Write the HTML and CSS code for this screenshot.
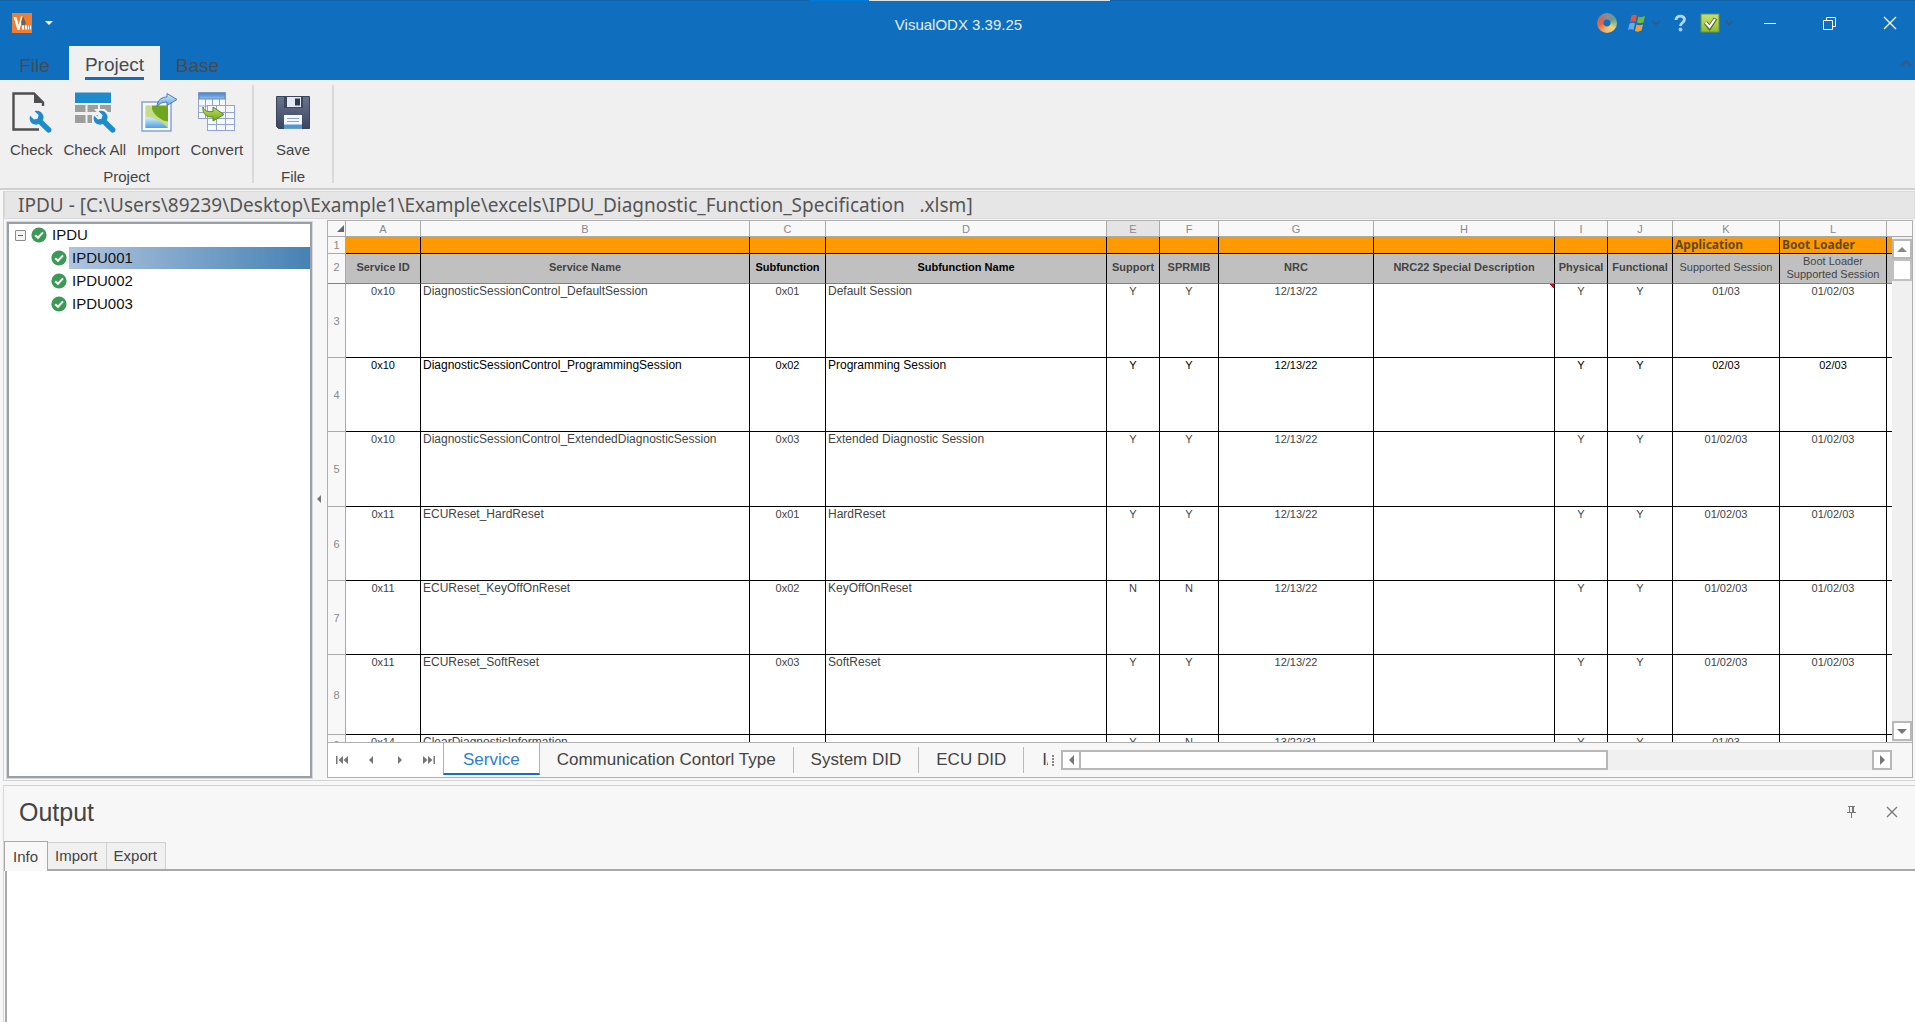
FILE: index.html
```html
<!DOCTYPE html>
<html lang="en">
<head>
<meta charset="utf-8">
<title>VisualODX 3.39.25</title>
<link rel="stylesheet" href="styles.css">
</head>
<body>
<svg class="defs" aria-hidden="true">
  <defs>
    <linearGradient id="g-green" x1="0" y1="0" x2="0" y2="1"><stop offset="0" stop-color="#c8e07a"/><stop offset="1" stop-color="#8dbd2c"/></linearGradient>
    <linearGradient id="g-blue" x1="0" y1="0" x2="0" y2="1"><stop offset="0" stop-color="#d6efff"/><stop offset="1" stop-color="#4f9fe0"/></linearGradient>
    <linearGradient id="g-head" x1="0" y1="0" x2="0" y2="1"><stop offset="0" stop-color="#4a86cc"/><stop offset="1" stop-color="#8fc0ea"/></linearGradient>
    <linearGradient id="g-disk" x1="0" y1="0" x2="0" y2="1"><stop offset="0" stop-color="#6a748e"/><stop offset="1" stop-color="#3b4560"/></linearGradient>
    <linearGradient id="g-arrow" x1="0" y1="0" x2="0" y2="1"><stop offset="0" stop-color="#c2e25a"/><stop offset="1" stop-color="#6fa51c"/></linearGradient>
    <symbol id="i-ok" viewBox="0 0 16 16"><circle cx="8" cy="8" r="7.6" fill="#3c9a57"/><path d="M4.2 8.2 7 10.8 12 5.4" fill="none" stroke="#fff" stroke-width="2"/></symbol>
    <symbol id="i-chev" viewBox="0 0 8 6"><path d="M.5 1 4 4.500 7.500 1" fill="none" stroke="#3d5a78" stroke-width="1.600"/></symbol>
    <symbol id="i-wrench" viewBox="0 0 24 24"><path d="M5.800 1.200 10 5.200 9 9 5.200 10 1.200 6C-.4 10 1.600 14.400 6 15.200c1.500.3 2.900 0 4.200-.6l8.200 8.200c1.300 1.300 3 1.300 4.200.2 1.200-1.200 1.200-3 0-4.200L14.300 10.600c.8-1.500 1.100-3 .6-4.800C13.900 2.200 9.800-.2 5.800 1.200z"/></symbol>
  </defs>
</svg>

<header class="titlebar">
  <div class="title-row">
    <div class="quick">
      <svg width="20" height="20" viewBox="0 0 20 20"><rect width="20" height="20" fill="#f07d31"/><path d="M1.500 4h3l2 8 2.500-8.500h2L7.500 17h-2z" fill="#fff"/><path d="m9 9 2-6 3 7-1 2h-3z" fill="#6a6460"/><path d="M10 12.500h2v4h-2zm3 0h2v4h-2zm3 0h1v4h-1zM18 12.500h1v4h-1z" fill="#fff"/></svg>
      <button class="plain" aria-label="Customize toolbar"><svg width="8" height="5"><path d="M0 0h8L4 4z" fill="#fff"/></svg></button>
    </div>
    <h1 class="app-title">VisualODX 3.39.25</h1>
    <div class="tools">
      <button class="plain" aria-label="Skin"><span class="ring"></span></button>
      <button class="plain" aria-label="Window style">
        <svg width="20" height="20" viewBox="0 0 20 20"><path d="M4.500 2.500Q8 1 10 2.500L8.500 9Q6.500 7.500 3 9z" fill="#dd5548"/><path d="M11.500 3.500Q14 5 18 3L16.500 9.500Q13 11 10 9.500z" fill="#74b843"/><path d="M2.500 10.500Q6 9 8 10.500L6.500 17Q4 15.500 1 17z" fill="#6ba9e6"/><path d="M9.500 11.500Q12 13 16 11.500L14.500 17.500Q11 19.500 8 18z" fill="#f0a03a"/></svg>
        <svg width="8" height="6"><use href="#i-chev"/></svg>
      </button>
      <button class="plain" aria-label="Help"><svg width="20" height="20" viewBox="0 0 20 20"><path d="M6 7c0-5 8.500-5 8.500-.5 0 3-4 3-4 6.500" fill="none" stroke="#b5d8f8" stroke-width="2.800"/><circle cx="10.500" cy="16.500" r="1.900" fill="#a6cdf2"/></svg></button>
      <button class="plain" aria-label="Validation">
        <svg width="20" height="20" viewBox="0 0 20 20"><rect x="1" y="1" width="18" height="18" fill="url(#g-green)" stroke="#71942a"/><path d="m5.500 9.500 4 5 6-9" fill="none" stroke="#54602f" stroke-width="4"/><path d="m5.500 9.500 4 4.500 5.500-8" fill="none" stroke="#fff" stroke-width="2.200"/></svg>
        <svg width="8" height="6"><use href="#i-chev"/></svg>
      </button>
      <div class="window-buttons">
        <button class="plain" aria-label="Minimize"><svg width="14" height="14"><path d="M1 7.500h12" stroke="#fff"/></svg></button>
        <button class="plain" aria-label="Restore"><svg width="14" height="14"><path d="M.5 4.500h9v9h-9zM3.500 4V1.500h9v9H10" fill="none" stroke="#fff"/></svg></button>
        <button class="plain" aria-label="Close"><svg width="14" height="14"><path d="m1 1 12 12M13 1 1 13" stroke="#fff" stroke-width="1.300"/></svg></button>
      </div>
    </div>
  </div>
  <nav class="ribbon-tabs">
    <button class="ribbon-tab">File</button>
    <button class="ribbon-tab active"><span>Project</span></button>
    <button class="ribbon-tab">Base</button>
    <button class="plain collapse" aria-label="Collapse ribbon"><svg width="12" height="8"><path d="m1 7 5-5 5 5" fill="none" stroke="#3d5a78" stroke-width="1.800"/></svg></button>
  </nav>
</header>

<section class="ribbon">
  <div class="group">
    <div class="group-items">
      <button class="cmd"><svg width="42" height="42" viewBox="0 0 42 42"><path d="M33 15V11.500L24 2.500H3.500v36H29" fill="none" stroke="#4f4f4f" stroke-width="2.400"/><path d="M24 2v10h10z" fill="#4f4f4f"/><use href="#i-wrench" x="19" y="18" width="24" height="24" fill="#f0f0f0" stroke="#f0f0f0" stroke-width="4"/><use href="#i-wrench" x="19" y="19" width="23" height="23" fill="#1e8bcd"/></svg>Check</button>
      <button class="cmd"><svg width="42" height="42" viewBox="0 0 42 42"><path d="M1 1.500h36V12H1z" fill="#1e8bcd"/><path d="M1 14h10.500v7H1zm12.500 0H24v7H13.500zM26 14h11v7H26zM1 24h10.500v8H1zm12.500 0H24v8H13.500z" fill="#9d9d9b"/><use href="#i-wrench" x="18" y="18" width="24" height="24" fill="#f0f0f0" stroke="#f0f0f0" stroke-width="4"/><use href="#i-wrench" x="19" y="19" width="23" height="23" fill="#1e8bcd"/></svg>Check All</button>
      <button class="cmd"><svg width="42" height="42" viewBox="0 0 42 42"><rect x="5" y="11" width="29" height="29" fill="#f7faff" stroke="#8ba1d2" stroke-width="1.500"/><path d="M8.500 14.500H31V37H8.500z" fill="#dcebb4"/><path d="M15 14.500h16v16c-7 0-14-3-16-9z" fill="#6ea71b"/><path d="M8.500 14.500h6c0 8 7 13 16.500 17V37H8.500z" fill="#c7dc8a"/><path d="M8.500 26c8 0 16 4 22.500 11H8.500z" fill="url(#g-blue)"/><path d="M20 16C20 8 26 6 30 6V2.500L40 8.500l-10 6V11c-4 0-7 1-10 5z" fill="url(#g-blue)" stroke="#5377b4"/></svg>Import</button>
      <button class="cmd"><svg width="42" height="42" viewBox="0 0 42 42"><g stroke="#94a3d2" fill="#f5f8ff"><rect x="2.500" y="1.500" width="27" height="26"/><path d="M9.500 8v19m7-19v19m7-19v19M3 15h27M3 21.500h27"/><rect x="3" y="2" width="26" height="6" fill="url(#g-head)" stroke="#6389c0"/><rect x="11.500" y="14.500" width="27" height="25"/><path d="M20.500 15v24m9-24v24M12 21.500h26M12 27.500h26M12 33.500h26"/></g><path d="M7 16c1 4 5 5 10 4.500V16l11 7.500L17 30v-4C11 26.500 6 23 7 16z" fill="url(#g-arrow)" stroke="#5a8a1d"/></svg>Convert</button>
    </div>
    <div class="group-name">Project</div>
  </div>
  <div class="group group-file">
    <div class="group-items">
      <button class="cmd"><svg width="42" height="42" viewBox="0 0 42 42"><path d="M4.500 5.500h33v32h-31l-2-2z" fill="url(#g-disk)" stroke="#39435c"/><path d="M12 5h19v12H12z" fill="#3c465f"/><path d="M15 6h14v10H15z" fill="#e4e9f1"/><path d="M23 7.500h5v7h-5z" fill="#2e3850"/><path d="M12 24h18v13.500H12z" fill="#f5f8fc"/><path d="M12 33.500h18v4H12z" fill="#4b9ad6"/><path d="M15 27.500h12M15 30.500h12" stroke="#8ea3c4"/></svg>Save</button>
    </div>
    <div class="group-name">File</div>
  </div>
</section>

<main class="workspace">
  <h2 class="caption">IPDU - [C:\Users\89239\Desktop\Example1\Example\excels\IPDU_Diagnostic_Function_Specification&nbsp;&nbsp; .xlsm]</h2>
  <div class="split">
    <aside class="tree">
      <div class="tree-row root"><button class="toggle" aria-label="Collapse IPDU"></button><svg width="16" height="16"><use href="#i-ok"/></svg><span class="node">IPDU</span></div>
      <div class="tree-row"><svg width="16" height="16"><use href="#i-ok"/></svg><span class="node selected">IPDU001</span></div>
      <div class="tree-row"><svg width="16" height="16"><use href="#i-ok"/></svg><span class="node">IPDU002</span></div>
      <div class="tree-row"><svg width="16" height="16"><use href="#i-ok"/></svg><span class="node">IPDU003</span></div>
    </aside>
    <div class="splitter"><svg width="5" height="8"><path d="M4 0v8L0 4z" fill="#777"/></svg></div>
    <section class="sheet">
      <div class="sheet-body">
        <div class="cells">
          <table>
            <colgroup><col class="w-n"><col class="w-a"><col class="w-b"><col class="w-c"><col class="w-d"><col class="w-e"><col class="w-f"><col class="w-g"><col class="w-h"><col class="w-i"><col class="w-j"><col class="w-k"><col class="w-l"><col></colgroup>
            <thead>
              <tr class="letters"><th class="corner"><svg width="7" height="7"><path d="M7 0v7H0z" fill="#666"/></svg></th><th>A</th><th>B</th><th>C</th><th>D</th><th class="hot">E</th><th>F</th><th>G</th><th>H</th><th>I</th><th>J</th><th>K</th><th>L</th><th></th></tr>
              <tr class="band"><th class="num">1</th><td></td><td></td><td></td><td></td><td></td><td></td><td></td><td></td><td></td><td></td><td>Application</td><td>Boot Loader</td><td></td></tr>
              <tr class="heads"><th class="num">2</th><th>Service ID</th><th>Service Name</th><th class="dark">Subfunction</th><th class="dark">Subfunction Name</th><th>Support</th><th>SPRMIB</th><th>NRC</th><th>NRC22 Special Description</th><th>Physical</th><th>Functional</th><th class="light">Supported Session</th><th class="light">Boot Loader<br>Supported Session</th><th></th></tr>
            </thead>
            <tbody>
              <tr><th class="num">3</th><td>0x10</td><td>DiagnosticSessionControl_DefaultSession</td><td>0x01</td><td>Default Session</td><td>Y</td><td>Y</td><td>12/13/22</td><td class="note"></td><td>Y</td><td>Y</td><td>01/03</td><td>01/02/03</td><td></td></tr>
              <tr class="dark"><th class="num">4</th><td>0x10</td><td>DiagnosticSessionControl_ProgrammingSession</td><td>0x02</td><td>Programming Session</td><td>Y</td><td>Y</td><td>12/13/22</td><td></td><td>Y</td><td>Y</td><td>02/03</td><td>02/03</td><td></td></tr>
              <tr class="mid"><th class="num">5</th><td>0x10</td><td>DiagnosticSessionControl_ExtendedDiagnosticSession</td><td>0x03</td><td>Extended Diagnostic Session</td><td>Y</td><td>Y</td><td>12/13/22</td><td></td><td>Y</td><td>Y</td><td>01/02/03</td><td>01/02/03</td><td></td></tr>
              <tr><th class="num">6</th><td>0x11</td><td>ECUReset_HardReset</td><td>0x01</td><td>HardReset</td><td>Y</td><td>Y</td><td>12/13/22</td><td></td><td>Y</td><td>Y</td><td>01/02/03</td><td>01/02/03</td><td></td></tr>
              <tr><th class="num">7</th><td>0x11</td><td>ECUReset_KeyOffOnReset</td><td>0x02</td><td>KeyOffOnReset</td><td>N</td><td>N</td><td>12/13/22</td><td></td><td>Y</td><td>Y</td><td>01/02/03</td><td>01/02/03</td><td></td></tr>
              <tr class="tall"><th class="num">8</th><td>0x11</td><td>ECUReset_SoftReset</td><td>0x03</td><td>SoftReset</td><td>Y</td><td>Y</td><td>12/13/22</td><td></td><td>Y</td><td>Y</td><td>01/02/03</td><td>01/02/03</td><td></td></tr>
              <tr class="last"><th class="num">9</th><td>0x14</td><td>ClearDiagnosticInformation</td><td></td><td></td><td>Y</td><td>N</td><td>13/22/31</td><td></td><td>Y</td><td>Y</td><td>01/03</td><td></td><td></td></tr>
            </tbody>
          </table>
        </div>
        <div class="vscroll">
          <div class="vscroll-head"></div>
          <button class="sb" aria-label="Scroll up"><svg width="10" height="5"><path d="M0 5h10L5 0z" fill="#888"/></svg></button>
          <div class="vthumb"></div>
          <button class="sb down" aria-label="Scroll down"><svg width="10" height="5"><path d="M0 0h10L5 5z" fill="#777"/></svg></button>
        </div>
      </div>
      <div class="sheet-foot">
        <div class="pager">
          <button class="plain" aria-label="First sheet"><svg width="12" height="8"><path d="M0 0h1.500v8H0zM7 0v8L2.500 4zM12 0v8L7.500 4z" fill="#777"/></svg></button>
          <button class="plain" aria-label="Previous sheet"><svg width="12" height="8"><path d="M8 0v8L4 4z" fill="#777"/></svg></button>
          <button class="plain" aria-label="Next sheet"><svg width="12" height="8"><path d="M4 0v8l4-4z" fill="#777"/></svg></button>
          <button class="plain" aria-label="Last sheet"><svg width="12" height="8"><path d="M10.500 0H12v8h-1.500zM0 0v8l4.500-4zM5 0v8l4.500-4z" fill="#777"/></svg></button>
        </div>
        <button class="sheet-tab active">Service</button>
        <button class="sheet-tab">Communication Contorl Type</button>
        <button class="sheet-tab">System DID</button>
        <button class="sheet-tab">ECU DID</button>
        <button class="sheet-tab cut">I/O</button>
        <span class="grip"></span>
        <div class="hscroll">
          <button class="sb" aria-label="Scroll left"><svg width="5" height="10"><path d="M5 0v10L0 5z" fill="#777"/></svg></button>
          <div class="hthumb"></div>
          <div class="htrack"></div>
          <button class="sb" aria-label="Scroll right"><svg width="5" height="10"><path d="M0 0v10l5-5z" fill="#777"/></svg></button>
        </div>
      </div>
    </section>
  </div>
</main>

<section class="output">
  <div class="output-head">
    <h2>Output</h2>
    <button class="plain" aria-label="Auto hide"><svg width="9" height="12"><path d="M1 .5h7M2.500 1v5M6.500 1v5M5.500 1v5M0 6.500h9M4.500 7v5" fill="none" stroke="#777"/></svg></button>
    <button class="plain" aria-label="Close output"><svg width="12" height="12"><path d="m1 1 10 10M11 1 1 11" stroke="#777" stroke-width="1.300"/></svg></button>
  </div>
  <div class="output-tabs">
    <button class="out-tab active">Info</button><button class="out-tab">Import</button><button class="out-tab">Export</button>
  </div>
  <div class="output-body" role="log"></div>
</section>
</body>
</html>
```

FILE: styles.css
```css
* { box-sizing: border-box; }

body {
  margin: 0;
  height: 100vh;
  display: flex;
  flex-direction: column;
  overflow: hidden;
  background: #f7f7f7;
  color: #444;
  font: 15px/18px "Liberation Sans", Arial, sans-serif;
}

button { font: inherit; color: inherit; margin: 0; padding: 0; border: 0; background: none; }
svg { display: block; flex: none; }
h1, h2 { margin: 0; font-weight: 400; }
.defs { position: absolute; width: 0; height: 0; }
.plain { display: flex; align-items: center; justify-content: center; gap: 5px; }

/* Title bar */
.titlebar {
  flex: none;
  background: linear-gradient(90deg, #0f63ab 809px, #0078d7 809px, #0078d7 869px, #d8e2ea 869px, #d8e2ea 1110px, #0f63ab 1110px) top / 100% 1px no-repeat #106ebe;
}
.title-row {
  display: grid;
  grid-template-columns: 1fr auto 1fr;
  align-items: center;
  height: 46px;
}
.quick { display: flex; align-items: center; gap: 13px; padding-left: 12px; }
.app-title { color: #e4eef8; font-size: 15px; padding: 3px 0 0 2px; }
.tools { display: flex; justify-content: flex-end; align-items: center; gap: 10px; }
.ring {
  width: 20px;
  height: 20px;
  border-radius: 50%;
  background: radial-gradient(circle, #106ebe 3px, transparent 4px), conic-gradient(#8c8c96, #5f9c96 60deg, #ecd679 130deg, #f5b56a 190deg, #e9643c 260deg, #b07070 310deg, #8c8c96);
}
.window-buttons { display: flex; gap: 10px; margin-left: 2px; }
.window-buttons button { width: 50px; height: 30px; }

.ribbon-tabs { display: flex; height: 34px; color: #474b50; font-size: 19px; line-height: 22px; }
.ribbon-tab { width: 69px; padding-top: 5px; }
.ribbon-tab.active { width: 91px; padding-top: 3px; background: #f0f0f0; }
.ribbon-tab.active span { display: inline-block; border-bottom: 3px solid #106ebe; height: 30px; padding-top: 4px; }
.ribbon-tab:nth-child(3) { width: 75px; }
.collapse { margin-left: auto; width: 18px; }

/* Ribbon */
.ribbon { flex: none; display: flex; background: #f0f0f0; border-bottom: 2px solid #d0d0d0; padding: 5px 0; height: 110px; }
.group { display: flex; flex-direction: column; border-right: 2px solid #dadada; padding: 6px 9px 0 10px; }
.group-file { padding: 6px 18px 0; }
.group-items { display: flex; gap: 11px; }
.cmd { display: flex; flex-direction: column; align-items: center; gap: 8px; }
.group-name { text-align: center; margin-top: 9px; }

/* Document area */
.workspace { flex: 1; min-height: 0; display: flex; flex-direction: column; margin: 1px 0 0 3px; border-left: 1px solid #d4d4d4; }
.caption {
  height: 28px;
  background: #e6e6e6;
  border: 1px solid #dadada;
  padding-left: 13px;
  font: 19px/26px "Noto Sans", sans-serif;
  color: #555;
  white-space: nowrap;
  overflow: hidden;
}
.split { flex: 1; min-height: 0; display: flex; padding: 1px 2px 2px 3px; border-bottom: 1px solid #d4d4d4; }
.tree { width: 305px; margin: 2px 0 0; border: 2px solid #9aa0a8; outline: 1px solid #d8d8d8; background: #fff; color: #111; }
.tree-row { display: flex; align-items: center; height: 22px; padding-left: 42px; gap: 2px; }
.tree-row + .tree-row { height: 23px; }
.tree-row.root { padding-left: 6px; gap: 5px; }
.node { padding-left: 3px; line-height: 22px; flex: 1; }
.root .node { padding: 0; }
.node.selected { background: linear-gradient(90deg, #b0c4de, #4682b4); }
.toggle {
  width: 11px;
  height: 11px;
  border: 1px solid #8c8c8c;
  border-radius: 1px;
  background: linear-gradient(#4b63a7, #4b63a7) center / 5px 1px no-repeat #f4f4f4;
}
.splitter { width: 15px; display: flex; align-items: center; padding-left: 5px; }

/* Spreadsheet */
.sheet { flex: 1; min-width: 0; display: flex; flex-direction: column; border: 1px solid #b0b0b0; }
.sheet-body { flex: 1; min-height: 0; display: flex; }
.cells { flex: 1; min-width: 0; overflow: hidden; background: #fff; }
table { width: 100%; table-layout: fixed; border-collapse: separate; border-spacing: 0; font-size: 11px; line-height: 14px; }
th, td { padding: 0; overflow: hidden; white-space: nowrap; text-align: center; border: 0 solid #000; border-width: 0 1px 1px 0; }
td { vertical-align: top; }
.w-n { width: 18px; } .w-a { width: 75px; } .w-b { width: 329px; } .w-c { width: 76px; } .w-d { width: 281px; }
.w-e { width: 53px; } .w-f { width: 59px; } .w-g { width: 155px; } .w-h { width: 181px; } .w-i { width: 53px; }
.w-j { width: 65px; } .w-k { width: 107px; } .w-l { width: 107px; }
th:last-child, td:last-child { border-right: 0; }
.letters { height: 16px; }
.letters th { background: #f8f8f8; border-color: #aaa; color: #8a8a8a; font-weight: 400; }
.letters .hot { background: #e4e4e4; }
.corner svg { margin-left: 9px; }
.num { background: #f8f8f8; border-color: #aaa; color: #8a8a8a; font-weight: 400; }
.band { height: 17px; }
.band td { background: #ff9900; text-align: left; padding-left: 2px; font: 700 12px/16px "Noto Sans", sans-serif; color: #5f4a20; }
.heads { height: 30px; }
.heads th { border-bottom-color: #4a90cf; padding-bottom: 2px; line-height: 13px; }
.heads th:not(.num) { background: #c0c0c0; }
.heads .light { font-weight: 400; }
.heads .dark { color: #000; }
tbody tr { height: 74px; }
tbody .mid { height: 75px; }
tbody .tall { height: 80px; }
tbody .last { height: 20px; }
tbody td:nth-child(3), tbody td:nth-child(5) { text-align: left; padding-left: 2px; font-size: 12px; }
tbody .dark td { color: #000; }
.note { background: linear-gradient(225deg, #e00020 3px, transparent 3px); }

.sb { display: flex; align-items: center; justify-content: center; width: 20px; height: 20px; flex: none; background: #fff; border: 2px solid #b8b8b8; }
.vscroll { width: 20px; display: flex; flex-direction: column; align-items: center; background: #f0f0f0; padding-bottom: 1px; }
.vscroll-head { width: 100%; height: 16px; margin-bottom: 2px; border-bottom: 1px solid #aaa; background: #f8f8f8; flex: none; }
.vthumb { width: 20px; height: 22px; border: 2px solid #c0c0c0; background: #fff; }
.vscroll .down { margin-top: auto; }

.sheet-foot { flex: none; display: flex; align-items: center; height: 35px; border-top: 1px solid #b0b0b0; background: #f7f7f7; font-size: 17px; line-height: 20px; }
.pager { display: flex; align-items: center; justify-content: space-between; width: 115px; height: 100%; padding: 0 8px; background: #fff; }
.sheet-tab { flex: none; height: 26px; padding: 0 17px; border-right: 1px solid #b8b8b8; white-space: nowrap; }
.sheet-tab.active { align-self: flex-start; height: 32px; padding: 3px 19px 0; border: 1px solid #b0b0b0; border-width: 0 1px 0 1px; border-bottom: 2px solid #1070c8; background: #fff; color: #2b7fd0; }
.sheet-tab.cut { width: 24px; padding: 0 0 0 18px; border: 0; overflow: hidden; text-align: left; }
.grip { width: 2px; height: 11px; margin: 0 7px 0 4px; background: repeating-linear-gradient(#888 0 2px, transparent 2px 3px); }
.hscroll { flex: 1; display: flex; background: #f0f0f0; margin-right: 20px; }
.hthumb { flex: 523; height: 20px; border: 2px solid #b8b8b8; border-left-width: 0; background: #fff; }
.htrack { flex: 263; }

/* Output panel */
.output { flex: 0 0 237px; display: flex; flex-direction: column; margin: 4px 0 0 3px; border-top: 1px solid #d0d0d0; border-left: 1px solid #d8d8d8; }
.output-head { display: flex; align-items: center; gap: 30px; height: 55px; padding: 0 17px 4px 15px; }
.output-head h2 { flex: 1; font-size: 25px; line-height: 30px; }
.output-tabs { display: flex; align-items: flex-end; border-bottom: 2px solid #a9a9a9; }
.out-tab { height: 27px; padding: 0 8px 0 7px; border: 1px solid #d0d0d0; border-bottom: 0; border-left: 0; background: #f0f0f0; }
.out-tab.active { height: 30px; padding: 0 9px 0 8px; margin-bottom: -2px; border: 1px solid #a9a9a9; border-bottom: 0; background: #f8f8f8; }
.output-body { flex: 1; margin-left: 1px; border-left: 2px solid #a9a9a9; background: #fff; }
```
